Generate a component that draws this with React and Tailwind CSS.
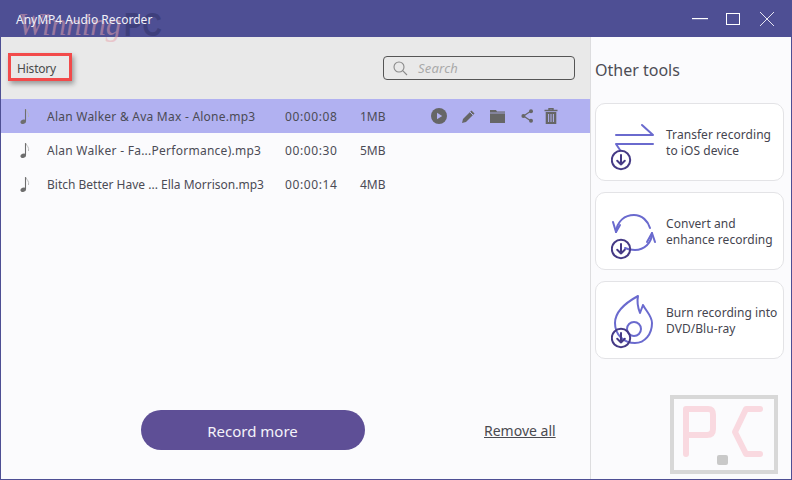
import React from "react";

const font = { fontFamily: '"Noto Sans", Tahoma, sans-serif' };

function Note() {
  return (
    <svg width="10" height="17" viewBox="0 0 10 17" className="text-[#6e6e6e]">
      <path d="M5.500 1 V13.500" stroke="currentColor" strokeWidth="1.1" fill="none" />
      <ellipse cx="3.2" cy="13.800" rx="2.800" ry="2.100" fill="currentColor" transform="rotate(-20 3.2 13.8)" />
      <path d="M6 1.500 C6.500 4 9.500 5 8.500 9" stroke="#b5b5b5" strokeWidth="0.9" fill="none" />
    </svg>
  );
}

function Badge() {
  return (
    <g fill="none" stroke="#453a85" strokeWidth="2" strokeLinecap="round" strokeLinejoin="round">
      <circle cx="10" cy="46" r="9.200" />
      <path d="M10 41 V50.500 M6.200 46.800 L10 50.500 L13.800 46.800" />
    </g>
  );
}

const rows = [
  ["Alan Walker & Ava Max - Alone.mp3", "00:00:08", "1MB", true, "tracking-[0.24px]"],
  ["Alan Walker - Fa...Performance).mp3", "00:00:30", "5MB", false, "tracking-[0.26px]"],
  ["Bitch Better Have ... Ella Morrison.mp3", "00:00:14", "4MB", false, "tracking-[0px]"],
];

function RowActions() {
  return (
    <div className="ml-[1px] flex items-center text-[#666666]">
      <svg width="16" height="16" viewBox="0 0 16 16" className="mr-[14px]">
        <circle cx="8" cy="8" r="8" fill="currentColor" />
        <path d="M6 4.800 L11.200 8 L6 11.200 Z" fill="#b1b1f1" />
      </svg>
      <svg width="15" height="15" viewBox="0 0 15 15" className="mr-[14px]">
        <path d="M1 14 L2 10 L10.500 1.500 L13.500 4.500 L5 13 Z" fill="currentColor" />
        <path d="M9 3 L12 6" stroke="#b1b1f1" strokeWidth="1" />
      </svg>
      <svg width="15" height="13" viewBox="0 0 15 13" className="mr-[16px]">
        <path d="M0 0 H6 L7 1.500 H15 V13 H0 Z" fill="currentColor" />
        <path d="M0 3 H15" stroke="#b1b1f1" strokeWidth="0.8" />
      </svg>
      <svg width="12" height="14" viewBox="0 0 12 14" className="mr-[11px]">
        <path d="M10 2 L2.500 7 L10 12" stroke="currentColor" strokeWidth="1.2" fill="none" />
        <circle cx="10" cy="2.200" r="2" fill="currentColor" />
        <circle cx="2.400" cy="7" r="2" fill="currentColor" />
        <circle cx="10" cy="11.800" r="2" fill="currentColor" />
      </svg>
      <svg width="14" height="16" viewBox="0 0 14 16">
        <path d="M0.500 2.500 H13.500 M5 2 V0.700 H9 V2" stroke="currentColor" strokeWidth="1.400" fill="none" />
        <path d="M1.700 4 H12.300 V16 H1.700 Z" fill="currentColor" />
        <path d="M4.600 6 V14 M7 6 V14 M9.400 6 V14" stroke="#b1b1f1" strokeWidth="1" />
      </svg>
    </div>
  );
}

function Tool({ icon, lines }) {
  return (
    <div className="flex h-[78px] items-center rounded-[10px] border border-[#e3e3e6] bg-white">
      <div className="ml-[15px] mr-[9px] w-[46px] shrink-0">{icon}</div>
      <div className="pt-[2px] text-[12px] leading-[16px] tracking-[0.05px] text-[#45454f]">
        {lines.map((l) => (
          <div key={l} className="whitespace-nowrap">{l}</div>
        ))}
      </div>
    </div>
  );
}

const iconTransfer = (
  <svg width="46" height="58" viewBox="0 0 46 58" className="mt-[4px]">
    <g fill="none" stroke="#6a6ace" strokeWidth="2" strokeLinejoin="round" strokeLinecap="round">
      <path d="M5 20 H42 L31 10" />
      <path d="M42 29 H5 L9 35" />
    </g>
    <g transform="translate(0,-1)"><Badge /></g>
  </svg>
);

const iconConvert = (
  <svg width="46" height="58" viewBox="0 0 46 58" className="mt-[2px]">
    <g fill="none" stroke="#6a6ace" strokeWidth="2" strokeLinejoin="round" strokeLinecap="round">
      <path d="M5 29 C6 18 14 12 23 12 C31 12 37 18 39 25" />
      <path d="M2 19 L5 29 L9 22" />
      <path d="M41 30 C41 40 33 47 24 47 C20 47 16 46 14 45" />
      <path d="M36 39 L41 30 L44 39" />
    </g>
    <Badge />
  </svg>
);

const iconBurn = (
  <svg width="46" height="62" viewBox="0 0 46 62">
    <g fill="none" stroke="#6a6ace" strokeWidth="2" strokeLinejoin="round" strokeLinecap="round">
      <path d="M27 7 C16 13 4 22 4 34 C4 46 13 54 24 54 C34 54 41 45 41 34 C41 27 35 22 32 16 C31 19 30 21 29 24 C27 19 26 12 27 7 Z" />
      <circle cx="23" cy="40" r="7" />
    </g>
    <g transform="translate(0,3)"><Badge /></g>
  </svg>
);

export default function App() {
  return (
    <div style={font} className="relative flex h-[480px] w-[792px] flex-col overflow-hidden border-x border-b border-[#4e4f94] bg-[#fbfbfd]">
      <header className="relative flex h-[37px] shrink-0 items-center bg-[#4e4f94] pl-[15px] pr-[16px] text-[12px] text-[#f1f1f8]">
        <span className="absolute left-[123px] top-[2px] origin-left scale-x-[0.8] text-[34px] font-bold leading-[44px] text-[#3e3f7c]" style={{ fontFamily: '"Liberation Sans", sans-serif' }}>PC</span>
        <span className="relative z-10 pt-[2px]">AnyMP4 Audio Recorder</span>
        <div className="ml-auto flex items-center">
          <svg width="16" height="2" className="mr-[18px]"><rect width="16" height="1.200" fill="#fff" /></svg>
          <svg width="14" height="12" className="mr-[19px]"><rect x="0.500" y="0.500" width="13" height="11" fill="none" stroke="#fff" /></svg>
          <svg width="16" height="16" viewBox="0 0 16 16"><path d="M1 1 L15 15 M15 1 L1 15" stroke="#e6e6f2" strokeWidth="1" /></svg>
        </div>
      </header>

      <div className="flex min-h-0 flex-1">
        <main className="flex w-[589px] flex-col">
          <div className="flex h-[62px] shrink-0 items-center justify-between bg-[#e9e9e9] pl-[16px] pr-[15px]">
            <span className="pt-[2px] text-[12px] tracking-[-0.2px] text-[#4a4a4a]">History</span>
            <div className="flex h-[24px] w-[192px] items-center rounded-[4px] border border-[#555555] pl-[9px]">
              <svg width="15" height="15" viewBox="0 0 15 15" fill="none" stroke="#8a8a8a" strokeWidth="1.100">
                <circle cx="6" cy="6" r="5" />
                <path d="M9.700 9.700 L14 14" />
              </svg>
              <span className="ml-[10px] pt-[2px] text-[13px] italic tracking-[0.2px] text-[#a9a9a9]">Search</span>
            </div>
          </div>

          <div className="flex-1">
            {rows.map(([name, time, size, active, tracking]) => (
              <div key={name} className={`flex h-[34px] items-center text-[12px] text-[#4b4b55] ${active ? "bg-[#b1b1f1]" : ""}`}>
                <div className="ml-[19px] flex w-[27px]"><Note /></div>
                <div className={`w-[238px] whitespace-nowrap pt-[2px] ${tracking}`}>{name}</div>
                <div className="w-[75px] pt-[2px] tracking-[0.6px]">{time}</div>
                <div className="w-[70px] pt-[2px]">{size}</div>
                {active && <RowActions />}
              </div>
            ))}
          </div>

          <div className="flex h-[69px] shrink-0 items-start">
            <button className="ml-[140px] h-[40px] w-[224px] rounded-full bg-[#5e4f96] pr-[1px] pt-[2px] text-[15px] text-[#f4f3fa]">Record more</button>
            <span className="ml-[119px] mt-[10px] text-[14px] text-[#4a4a50] underline">Remove all</span>
          </div>
        </main>

        <aside className="w-[201px] border-l border-[#dddddf] pl-[4px] pr-[7px]">
          <h2 className="mt-[21px] text-[16px] font-normal leading-[24px] text-[#4d4d55]">Other tools</h2>
          <div className="mt-[21px] flex flex-col gap-[11px]">
            <Tool icon={iconTransfer} lines={["Transfer recording", "to iOS device"]} />
            <Tool icon={iconConvert} lines={["Convert and", "enhance recording"]} />
            <Tool icon={iconBurn} lines={["Burn recording into", "DVD/Blu-ray"]} />
          </div>
        </aside>
      </div>

      {/* red annotation around History */}
      <div className="absolute left-[7px] top-[53px] h-[28px] w-[64px] border-[3px] border-[#f24a4a] shadow-[2px_3px_5px_rgba(0,0,0,0.35)]" />

      {/* "Winning" script of the watermark */}
      <span className="pointer-events-none absolute left-[17px] top-[7px] text-[31px] italic leading-[36px] text-[#e8a3ac]/50" style={{ fontFamily: '"Liberation Serif", serif' }}>Winning</span>

      {/* PC watermark bottom right */}
      <div className="pointer-events-none absolute left-[669px] top-[395px]">
        <svg width="108" height="79" viewBox="0 0 108 79">
          <rect x="2" y="2" width="104" height="75" fill="none" stroke="#d8d8d8" strokeWidth="4" />
          <path d="M16 59 V14 H38 C42 14 43 16 43 20 V34 C43 38 41 40 37 40 H16" fill="none" stroke="#f9d9e0" strokeWidth="6" strokeLinecap="round" strokeLinejoin="round" />
          <path d="M90 14 H76 L65 37 L76 59 H90" fill="none" stroke="#f9d9e0" strokeWidth="6" strokeLinecap="round" strokeLinejoin="round" />
          <rect x="47" y="60" width="11" height="10" rx="2" fill="#c9c9c9" />
        </svg>
      </div>
    </div>
  );
}
